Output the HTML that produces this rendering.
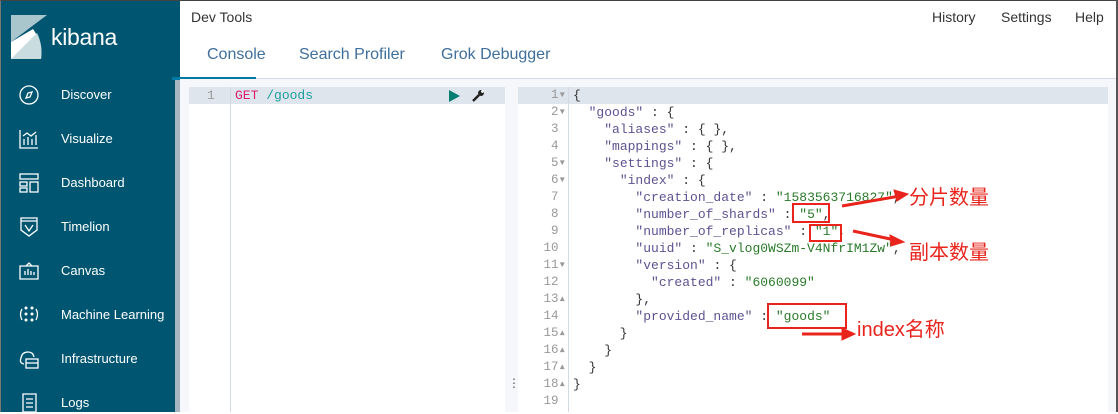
<!DOCTYPE html>
<html><head><meta charset="utf-8"><style>
*{margin:0;padding:0;box-sizing:border-box}
body{width:1118px;height:412px;overflow:hidden;background:#fff;font-family:"Liberation Sans","Noto Sans CJK SC",sans-serif;position:relative}
.side{position:absolute;left:0;top:0;width:180px;height:412px;background:#005571;border-left:1px solid #777;border-top:1px solid #444}
.sb{position:absolute;left:175px;top:79px;width:5px;height:333px;background:#a6b5bf}
.logo{position:absolute;left:10px;top:14px}
.kib{position:absolute;left:50px;top:23px;color:#fff;font-size:23px;letter-spacing:-0.3px}
.item{position:absolute;left:60px;color:#fff;font-size:13px}
.ic{position:absolute;left:17px;width:22px;height:22px}
.top{position:absolute;left:180px;top:0;right:0;height:79px;border-top:1px solid #444;border-right:2px solid #555}
.tab{position:absolute;top:45px;font-size:16px;color:#3f6f9a}
.mono{font-family:"Liberation Mono","DejaVu Sans Mono",monospace;font-size:13px}
.ln{position:absolute;height:17px;line-height:17px;white-space:pre}
.k{color:#5d5391}.s{color:#2a7a2a}.p{color:#333}
.red{position:absolute;border:2px solid #e8241c}
.cn{position:absolute;color:#e8241c;font-size:20px;font-family:"Liberation Sans","Noto Sans CJK SC",sans-serif}
</style></head><body>
<div class="side">
<svg class="logo" width="36" height="44" viewBox="0 0 36 44"><polygon points="0,0 36,0 0,27" fill="#a9c6cc"/><path d="M0,27 L22,14 Q32,28 30,44 L0,44Z" fill="#fff"/><path d="M0,44 L26,18 Q32,30 30,44Z" fill="#c9dcdf"/></svg>
<div class="kib">kibana</div>
<svg class="ic" style="top:83px" viewBox="0 0 22 22" fill="none" stroke="#fff" stroke-width="1.3"><circle cx="11" cy="11" r="9"/><path d="M14 8 L12 13 L8 14 L10 9Z"/></svg>
<div class="item" style="top:86px">Discover</div>
<svg class="ic" style="top:127px" viewBox="0 0 22 22" fill="none" stroke="#fff" stroke-width="1.3"><path d="M2 2V20H20M6 17V11M10 17V9M14 17V11M18 17V7M5 8L9 5L13 8L18 4"/></svg>
<div class="item" style="top:130px">Visualize</div>
<svg class="ic" style="top:171px" viewBox="0 0 22 22" fill="none" stroke="#fff" stroke-width="1.3"><rect x="2" y="2" width="18" height="5"/><rect x="2" y="10" width="7" height="4"/><rect x="2" y="16" width="7" height="4"/><rect x="12" y="10" width="8" height="10"/></svg>
<div class="item" style="top:174px">Dashboard</div>
<svg class="ic" style="top:215px" viewBox="0 0 22 22" fill="none" stroke="#fff" stroke-width="1.3"><path d="M3 2H19V14L11 20L3 14Z M3 5H19 M7 9L11 15L15 9"/></svg>
<div class="item" style="top:218px">Timelion</div>
<svg class="ic" style="top:259px" viewBox="0 0 22 22" fill="none" stroke="#fff" stroke-width="1.3"><path d="M2 6H20V19H2Z M8 6L11 3L14 6 M7 15V11M10 15V9M13 15V11M16 15V12"/></svg>
<div class="item" style="top:262px">Canvas</div>
<svg class="ic" style="top:303px" viewBox="0 0 22 22" fill="#fff"><circle cx="8" cy="4" r="1.5"/><circle cx="14" cy="4" r="1.5"/><circle cx="8" cy="10" r="1.5"/><circle cx="14" cy="10" r="1.5"/><circle cx="8" cy="16" r="1.5"/><circle cx="14" cy="16" r="1.5"/><path d="M4 5Q1 10 4 16M18 5Q21 10 18 16" stroke="#fff" fill="none" stroke-width="1.3"/></svg>
<div class="item" style="top:306px">Machine Learning</div>
<svg class="ic" style="top:347px" viewBox="0 0 22 22" fill="none" stroke="#fff" stroke-width="1.3"><path d="M6 16Q1 15 3 10Q4 4 10 4Q15 4 16 9"/><rect x="8" y="11" width="12" height="9"/><path d="M8 15H20"/></svg>
<div class="item" style="top:350px">Infrastructure</div>
<svg class="ic" style="top:391px" viewBox="0 0 22 22" fill="none" stroke="#fff" stroke-width="1.3"><path d="M5 2H18V20H5Z M8 7H15M8 11H15M8 15H15"/></svg>
<div class="item" style="top:394px">Logs</div>
</div>
<div class="sb"></div>
<div class="top">
<div style="position:absolute;left:11px;top:8px;font-size:14px;color:#333">Dev Tools</div>
<div style="position:absolute;left:752px;top:8px;font-size:14px;color:#333">History</div>
<div style="position:absolute;left:821px;top:8px;font-size:14px;color:#333">Settings</div>
<div style="position:absolute;left:895px;top:8px;font-size:14px;color:#333">Help</div>
<div class="tab" style="left:27px">Console</div>
<div class="tab" style="left:119px">Search Profiler</div>
<div class="tab" style="left:261px">Grok Debugger</div>
<div style="position:absolute;left:-8px;top:76px;width:84px;height:3px;background:#0079a5"></div>
<div style="position:absolute;left:-8px;top:77px;right:0;height:1px;background:#d3dae6;z-index:-1"></div>
</div>
<div style="position:absolute;left:180px;top:79px;width:936px;height:333px;background:#f5f7fa"></div>
<div style="position:absolute;left:1116px;top:0;width:2px;height:412px;background:#555"></div>
<div style="position:absolute;left:189px;top:87px;width:316px;height:325px;background:#fff"></div>
<div style="position:absolute;left:189px;top:87px;width:316px;height:17px;background:#dfe5ec"></div>
<div style="position:absolute;left:230px;top:87px;width:1px;height:325px;background:#d3dae6"></div>
<div class="ln mono" style="left:207px;top:87px;color:#999">1</div>
<div class="ln mono" style="left:235px;top:87px"><span style="color:#d6226f">GET</span> <span style="color:#1f9e9e">/goods</span></div>
<svg style="position:absolute;left:448px;top:90px" width="12" height="12"><polygon points="1,0 12,6 1,12" fill="#017d73"/></svg>
<svg style="position:absolute;left:471px;top:89px" width="14" height="14" viewBox="0 0 14 14"><path d="M2 12L8 6" stroke="#222" stroke-width="2.5"/><circle cx="10" cy="4" r="3" fill="#222"/><circle cx="11.5" cy="2.5" r="1.4" fill="#fff"/></svg>
<div style="position:absolute;left:508px;top:376px;color:#555;font-size:12px">⋮</div>
<div style="position:absolute;left:518px;top:87px;width:590px;height:325px;background:#fff"></div>
<div style="position:absolute;left:518px;top:87px;width:590px;height:17px;background:#dfe5ec"></div>
<div style="position:absolute;left:568px;top:87px;width:1px;height:325px;background:#d3dae6"></div>
<div class="mono" style="position:absolute;left:518px;top:87px;width:48px;color:#999;text-align:right;line-height:17px;font-size:12.5px">
1▾<br>2▾<br>3&nbsp;<br>4&nbsp;<br>5▾<br>6▾<br>7&nbsp;<br>8&nbsp;<br>9&nbsp;<br>10&nbsp;<br>11▾<br>12&nbsp;<br>13▴<br>14&nbsp;<br>15▴<br>16▴<br>17▴<br>18▴<br>19&nbsp;</div>
<div class="mono p" style="position:absolute;left:573px;top:87px;line-height:17px;white-space:pre">{
  <span class="k">"goods"</span> : {
    <span class="k">"aliases"</span> : { },
    <span class="k">"mappings"</span> : { },
    <span class="k">"settings"</span> : {
      <span class="k">"index"</span> : {
        <span class="k">"creation_date"</span> : <span class="s">"1583563716827"</span>,
        <span class="k">"number_of_shards"</span> : <span class="s">"5"</span>,
        <span class="k">"number_of_replicas"</span> : <span class="s">"1"</span>,
        <span class="k">"uuid"</span> : <span class="s">"S_vlog0WSZm-V4NfrIM1Zw"</span>,
        <span class="k">"version"</span> : {
          <span class="k">"created"</span> : <span class="s">"6060099"</span>
        },
        <span class="k">"provided_name"</span> : <span class="s">"goods"</span>
      }
    }
  }
}
</div>
<div class="red" style="left:792px;top:203px;width:38px;height:20px"></div>
<div class="red" style="left:809px;top:224px;width:33px;height:18px"></div>
<div class="red" style="left:767px;top:303px;width:80px;height:26px"></div>
<svg style="position:absolute;left:0;top:0" width="1118" height="412"><g fill="#e8241c" stroke="#e8241c"><path d="M842 206L900 196" stroke-width="3"/><polygon points="908,194 894,190 897,201"/><path d="M853 231L895 240" stroke-width="3"/><polygon points="904,242 890,235 891,246"/><path d="M802 334L845 334" stroke-width="3"/><polygon points="855,334 842,328 842,340"/></g></svg>
<div class="cn" style="left:909px;top:181px">分片数量</div>
<div class="cn" style="left:909px;top:236px">副本数量</div>
<div class="cn" style="left:857px;top:313px">index名称</div>
</body></html>
